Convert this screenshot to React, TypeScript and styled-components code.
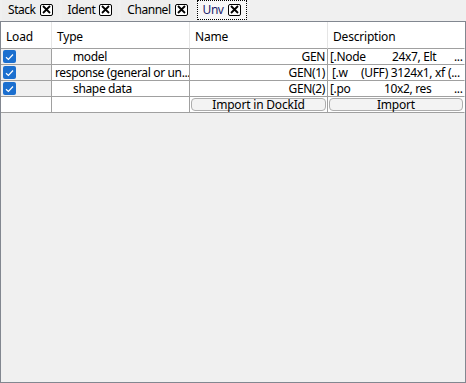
import React from "react";
import styled, { createGlobalStyle } from "styled-components";

const Global = createGlobalStyle`
  html, body { margin: 0; padding: 0; background: #f0f0f0; }
  body { font-family: "Noto Sans", "Open Sans", sans-serif; font-size: 12px; color: #000; }
  * { box-sizing: border-box; }
`;

const Root = styled.div`
  width: 466px;
  height: 383px;
  display: flex;
  flex-direction: column;
  background: #f0f0f0;
`;

const TabStrip = styled.div`
  height: 21px;
  display: flex;
  align-items: stretch;
  padding-left: 2px;
  gap: 3px;
`;

const Tab = styled.div<{ $active?: boolean }>`
  display: flex;
  align-items: center;
  gap: 4px;
  padding: 0 6px 1px 6px;
  height: 20px;
  background: ${(p) => (p.$active ? "#f7f7f7" : "#eeeeee")};
  outline: ${(p) => (p.$active ? "1px dotted #000" : "none")};
  outline-offset: -1px;
  line-height: 1;
`;

const TabLabel = styled.span<{ $active?: boolean }>`
  letter-spacing: -0.45px;
  color: ${(p) => (p.$active ? "#1a1a6a" : "#000")};
`;

const CloseBox = styled.span`
  width: 13px;
  height: 12px;
  border: 1px solid #000;
  border-radius: 2px;
  background: #fff;
  display: flex;
  align-items: center;
  justify-content: center;
`;

const Panel = styled.div`
  flex: 1;
  border: 1px solid #828790;
  background: #f0f0f0;
  display: flex;
  flex-direction: column;
`;

const Grid = styled.div`
  display: grid;
  grid-template-columns: 51px 138px 138px 1fr;
  grid-auto-rows: 16px;
  grid-template-rows: 27px;
`;

const HeadCell = styled.div<{ $last?: boolean }>`
  background: #fff;
  border-right: 1px solid ${(p) => (p.$last ? "transparent" : "#e5e5e5")};
  border-bottom: 1px solid #a0a0a0;
  padding: 0 0 0 5px;
  display: flex;
  align-items: center;
  padding-top: 2px;
  letter-spacing: -0.2px;
`;

const Cell = styled.div<{ $bg?: string; $align?: "left" | "right"; $indent?: number; $last?: boolean }>`
  background: ${(p) => p.$bg ?? "#fff"};
  border-right: 1px solid ${(p) => (p.$last ? "transparent" : "#a0a0a0")};
  border-bottom: 1px solid #a0a0a0;
  display: flex;
  align-items: center;
  justify-content: ${(p) => (p.$align === "right" ? "flex-end" : "flex-start")};
  padding-left: ${(p) => p.$indent ?? 3}px;
  padding-right: 2px;
  white-space: nowrap;
  overflow: hidden;
  letter-spacing: -0.35px;
  line-height: 15px;
`;

const CheckCell = styled(Cell)`
  padding-left: 2px;
`;

const Check = styled.span`
  width: 13px;
  height: 13px;
  background: #1b6fcf;
  border-radius: 2px;
  display: flex;
  align-items: center;
  justify-content: center;
`;

const Seg = styled.span<{ $w?: number }>`
  display: inline-block;
  flex: ${(p) => (p.$w ? `0 0 ${p.$w}px` : "0 0 auto")};
  white-space: nowrap;
`;

const ButtonCell = styled(Cell)`
  padding: 1px;
`;

const Btn = styled.button`
  width: 100%;
  height: 100%;
  border: 1px solid #adadad;
  border-radius: 4px;
  background: #f3f3f3;
  font: inherit;
  letter-spacing: -0.2px;
  padding: 0;
  color: #000;
  line-height: 12px;
`;

const XIcon = () => (
  <svg width="9" height="9" viewBox="0 0 9 9">
    <path d="M1 1 L8 8 M8 1 L1 8" stroke="#000" strokeWidth="1.8" />
  </svg>
);

const CheckIcon = () => (
  <svg width="9" height="8" viewBox="0 0 9 8">
    <path d="M1 4.2 L3.4 6.5 L8 1.5" stroke="#fff" strokeWidth="1.2" fill="none" />
  </svg>
);

type Row = {
  type: string;
  indent: number;
  name: string;
  desc: { t: string; w?: number }[];
  descPad: number;
};

const rows: Row[] = [
  { type: "model", indent: 21, name: "GEN", descPad: 2, desc: [{ t: "[.Node", w: 62 }, { t: "24x7, Elt", w: 62 }, { t: "..." }] },
  { type: "response (general or un...", indent: 3, name: "GEN(1)", descPad: 4, desc: [{ t: "[.w", w: 29 }, { t: "(UFF) 3124x1, xf", w: 87 }, { t: "(..." }] },
  { type: "shape data", indent: 21, name: "GEN(2)", descPad: 2, desc: [{ t: "[.po", w: 54 }, { t: "10x2, res", w: 70 }, { t: "..." }] },
];

const tabs = ["Stack", "Ident", "Channel", "Unv"];

export default function App() {
  return (
    <Root>
      <Global />
      <TabStrip>
        {tabs.map((t, i) => (
          <Tab key={t} $active={i === 3}>
            <TabLabel $active={i === 3}>{t}</TabLabel>
            <CloseBox>
              <XIcon />
            </CloseBox>
          </Tab>
        ))}
      </TabStrip>
      <Panel>
        <Grid>
          <HeadCell>Load</HeadCell>
          <HeadCell>Type</HeadCell>
          <HeadCell>Name</HeadCell>
          <HeadCell $last>Description</HeadCell>
          {rows.map((r) => (
            <React.Fragment key={r.name}>
              <CheckCell $bg="#f0f0f0">
                <Check>
                  <CheckIcon />
                </Check>
              </CheckCell>
              <Cell $indent={r.indent}>{r.type}</Cell>
              <Cell $align="right">{r.name}</Cell>
              <Cell $indent={r.descPad} $last>
                {r.desc.map((d, i) => (
                  <Seg key={i} $w={d.w}>
                    {d.t}
                  </Seg>
                ))}
              </Cell>
            </React.Fragment>
          ))}
          <Cell />
          <Cell />
          <ButtonCell>
            <Btn>Import in DockId</Btn>
          </ButtonCell>
          <ButtonCell $last>
            <Btn>Import</Btn>
          </ButtonCell>
        </Grid>
      </Panel>
    </Root>
  );
}
